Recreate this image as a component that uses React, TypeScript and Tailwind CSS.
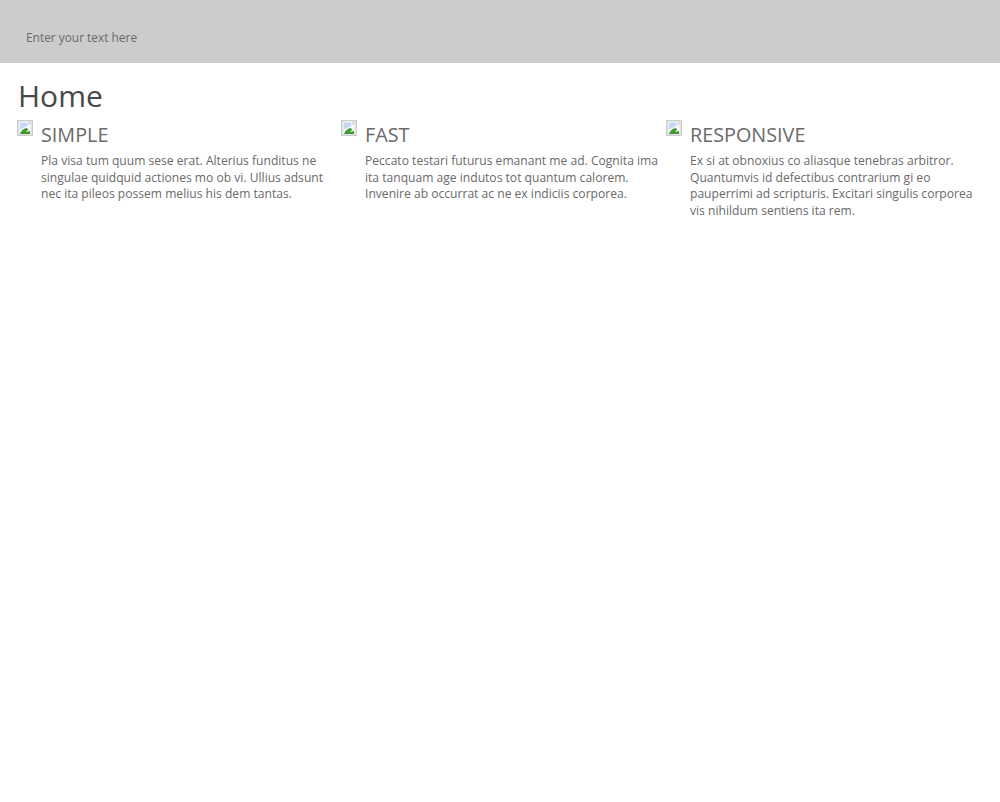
const columns = [
  {
    title: 'SIMPLE',
    lines: [
      'Pla visa tum quum sese erat. Alterius funditus ne',
      'singulae quidquid actiones mo ob vi. Ullius adsunt',
      'nec ita pileos possem melius his dem tantas.',
    ],
  },
  {
    title: 'FAST',
    lines: [
      'Peccato testari futurus emanant me ad. Cognita ima',
      'ita tanquam age indutos tot quantum calorem.',
      'Invenire ab occurrat ac ne ex indiciis corporea.',
    ],
  },
  {
    title: 'RESPONSIVE',
    lines: [
      'Ex si at obnoxius co aliasque tenebras arbitror.',
      'Quantumvis id defectibus contrarium gi eo',
      'pauperrimi ad scripturis. Excitari singulis corporea',
      'vis nihildum sentiens ita rem.',
    ],
  },
];

function BrokenImage() {
  return (
    <svg width="16" height="16" viewBox="0 0 16 16" className="shrink-0">
      <rect x="0.5" y="0.5" width="15" height="15" fill="#e2e2e2" stroke="#cccccc" />
      <path d="M2.500 1.500h8.500l2.500 2.500v10h-11z" fill="#f8f9fb" />
      <path d="M11 1.500v3h2.500z" fill="#d0d0d0" />
      <path d="M3 2.500h7v2l1 1-8 4z" fill="#c4d8f6" />
      <path d="M3 14c1-3 3.500-5.500 6.500-6l2 1.500-3 2.500 4.500-1v3z" fill="#3f9a2d" />
    </svg>
  );
}

export default function App() {
  return (
    <div className="min-h-[802px] bg-white font-['Open_Sans',sans-serif]">
      <header className="h-[63px] bg-[#cccccc] border-b border-[#c8c8c8] pl-[26px] pt-[29px]">
        <p className="text-[11.9px] leading-[17px] text-[#6a6a6a]">Enter your text here</p>
      </header>
      <main className="pl-[18px]">
        <h1 className="pt-[13px] text-[30px] leading-[40px] text-[#484848]">Home</h1>
        <div className="mt-[4px] -ml-px grid grid-cols-[324px_325px_1fr]">
          {columns.map((col) => (
            <section key={col.title} className="flex gap-[8px]">
              <BrokenImage />
              <div>
                <h2 className="text-[19.8px] leading-[27px] text-[#6a6a6a] pt-px">{col.title}</h2>
                <p className="mt-[4.6px] text-[12.1px] leading-[16.9px] text-[#6a6a6a] whitespace-nowrap">
                  {col.lines.map((line) => (
                    <span key={line} className="block">{line}</span>
                  ))}
                </p>
              </div>
            </section>
          ))}
        </div>
      </main>
    </div>
  );
}
